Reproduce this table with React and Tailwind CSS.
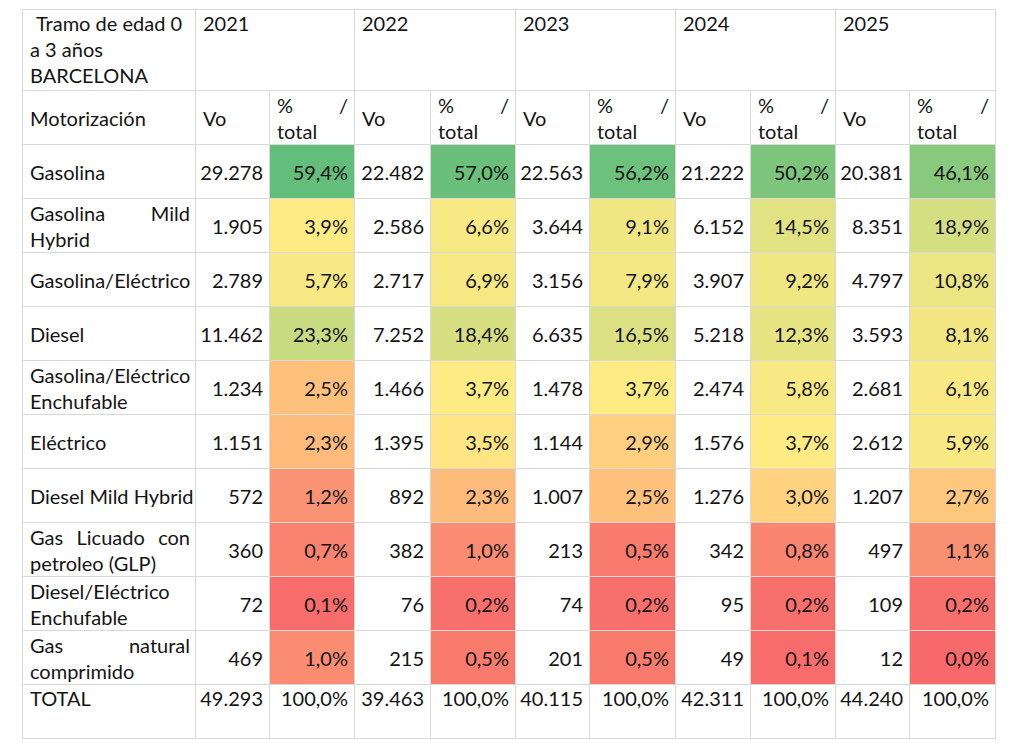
import React from 'react';

const YEARS = ['2021', '2022', '2023', '2024', '2025'];

// label lines, justified first line?, [vo, pct] per year
const ROWS = [
  { label: ['Gasolina'], values: [['29.278', 59.4], ['22.482', 57.0], ['22.563', 56.2], ['21.222', 50.2], ['20.381', 46.1]] },
  { label: ['Gasolina Mild', 'Hybrid'], justify: true, values: [['1.905', 3.9], ['2.586', 6.6], ['3.644', 9.1], ['6.152', 14.5], ['8.351', 18.9]] },
  { label: ['Gasolina/Eléctrico'], values: [['2.789', 5.7], ['2.717', 6.9], ['3.156', 7.9], ['3.907', 9.2], ['4.797', 10.8]] },
  { label: ['Diesel'], values: [['11.462', 23.3], ['7.252', 18.4], ['6.635', 16.5], ['5.218', 12.3], ['3.593', 8.1]] },
  { label: ['Gasolina/Eléctrico', 'Enchufable'], values: [['1.234', 2.5], ['1.466', 3.7], ['1.478', 3.7], ['2.474', 5.8], ['2.681', 6.1]] },
  { label: ['Eléctrico'], values: [['1.151', 2.3], ['1.395', 3.5], ['1.144', 2.9], ['1.576', 3.7], ['2.612', 5.9]] },
  { label: ['Diesel Mild Hybrid'], values: [['572', 1.2], ['892', 2.3], ['1.007', 2.5], ['1.276', 3.0], ['1.207', 2.7]] },
  { label: ['Gas Licuado con', 'petroleo (GLP)'], justify: true, values: [['360', 0.7], ['382', 1.0], ['213', 0.5], ['342', 0.8], ['497', 1.1]] },
  { label: ['Diesel/Eléctrico', 'Enchufable'], values: [['72', 0.1], ['76', 0.2], ['74', 0.2], ['95', 0.2], ['109', 0.2]] },
  { label: ['Gas natural', 'comprimido'], justify: true, values: [['469', 1.0], ['215', 0.5], ['201', 0.5], ['49', 0.1], ['12', 0.0]] },
];

const TOTALS = ['49.293', '39.463', '40.115', '42.311', '44.240'];

// Excel 3-colour scale: min red, median yellow, max green
const RED = [248, 105, 107];
const YELLOW = [255, 235, 132];
const GREEN = [99, 190, 123];
const MIN = 0;
const MID = 3.7;
const MAX = 59.4;

function scaleColor(v) {
  let a, b, t;
  if (v <= MID) {
    a = RED; b = YELLOW; t = (v - MIN) / (MID - MIN);
  } else {
    a = YELLOW; b = GREEN; t = (v - MID) / (MAX - MID);
  }
  const c = a.map((x, i) => Math.round(x + (b[i] - x) * t));
  return `rgb(${c[0]}, ${c[1]}, ${c[2]})`;
}

const fmt = (v) => v.toFixed(1).replace('.', ',') + '%';

const WIDTHS = [173, 74, 85, 76, 85, 74, 86, 75, 85, 74, 86];

export default function App() {
  return (
    <div className="w-[1024px] h-[743px] bg-white pt-[9px] pl-[22px] text-[20px] leading-[26px] text-[#141414]" style={{ fontFamily: 'Lato, "Open Sans", sans-serif' }}>
      <table className="table-fixed border-collapse w-[973px]">
        <colgroup>
          {WIDTHS.map((w, i) => (
            <col key={i} style={{ width: w }} />
          ))}
        </colgroup>
        <tbody>
          {/* Year header */}
          <tr className="h-[81px]">
            <td className="border border-[#d9d9d9] align-top pt-0 pl-[13px] pr-[5px]">
              <div>Tramo de edad 0</div>
              <div className="-ml-[6px]">a 3 años</div>
              <div className="-ml-[6px]">BARCELONA</div>
            </td>
            {YEARS.map((y) => (
              <td key={y} colSpan={2} className="border border-[#d9d9d9] align-top pt-0 px-[7px]">
                {y}
              </td>
            ))}
          </tr>

          {/* Sub header */}
          <tr className="h-[54px]">
            <td className="border border-[#d9d9d9] px-[7px]">Motorización</td>
            {YEARS.map((y) => (
              <React.Fragment key={y}>
                <td className="border border-[#d9d9d9] px-[7px]">Vo</td>
                <td className="border border-[#d9d9d9] pl-[7px] pr-[6px]">
                  <div className="flex justify-between">
                    <span>%</span>
                    <span>/</span>
                  </div>
                  <div>total</div>
                </td>
              </React.Fragment>
            ))}
          </tr>

          {ROWS.map((row, r) => (
            <tr key={r} className="h-[54px]">
              <td className="border border-[#d9d9d9] pl-[7px] pr-[5px]">
                {row.label.map((line, i) =>
                  row.justify && i === 0 ? (
                    <div key={i} className="flex justify-between">
                      {line.split(' ').map((w, j) => (
                        <span key={j}>{w}</span>
                      ))}
                    </div>
                  ) : (
                    <div key={i} className="whitespace-nowrap">{line}</div>
                  )
                )}
              </td>
              {row.values.map(([vo, pct], c) => (
                <React.Fragment key={c}>
                  <td className="border border-[#d9d9d9] text-right pr-[6px]">{vo}</td>
                  <td className="border border-[#d9d9d9] text-right pr-[6px]" style={{ backgroundColor: scaleColor(pct) }}>
                    {fmt(pct)}
                  </td>
                </React.Fragment>
              ))}
            </tr>
          ))}

          {/* Total */}
          <tr className="h-[54px]">
            <td className="border border-[#d9d9d9] align-top pt-0 px-[7px]">TOTAL</td>
            {TOTALS.map((t, c) => (
              <React.Fragment key={c}>
                <td className="border border-[#d9d9d9] align-top pt-0 text-right pr-[6px]">{t}</td>
                <td className="border border-[#d9d9d9] align-top pt-0 text-right pr-[6px]">100,0%</td>
              </React.Fragment>
            ))}
          </tr>
        </tbody>
      </table>
    </div>
  );
}
